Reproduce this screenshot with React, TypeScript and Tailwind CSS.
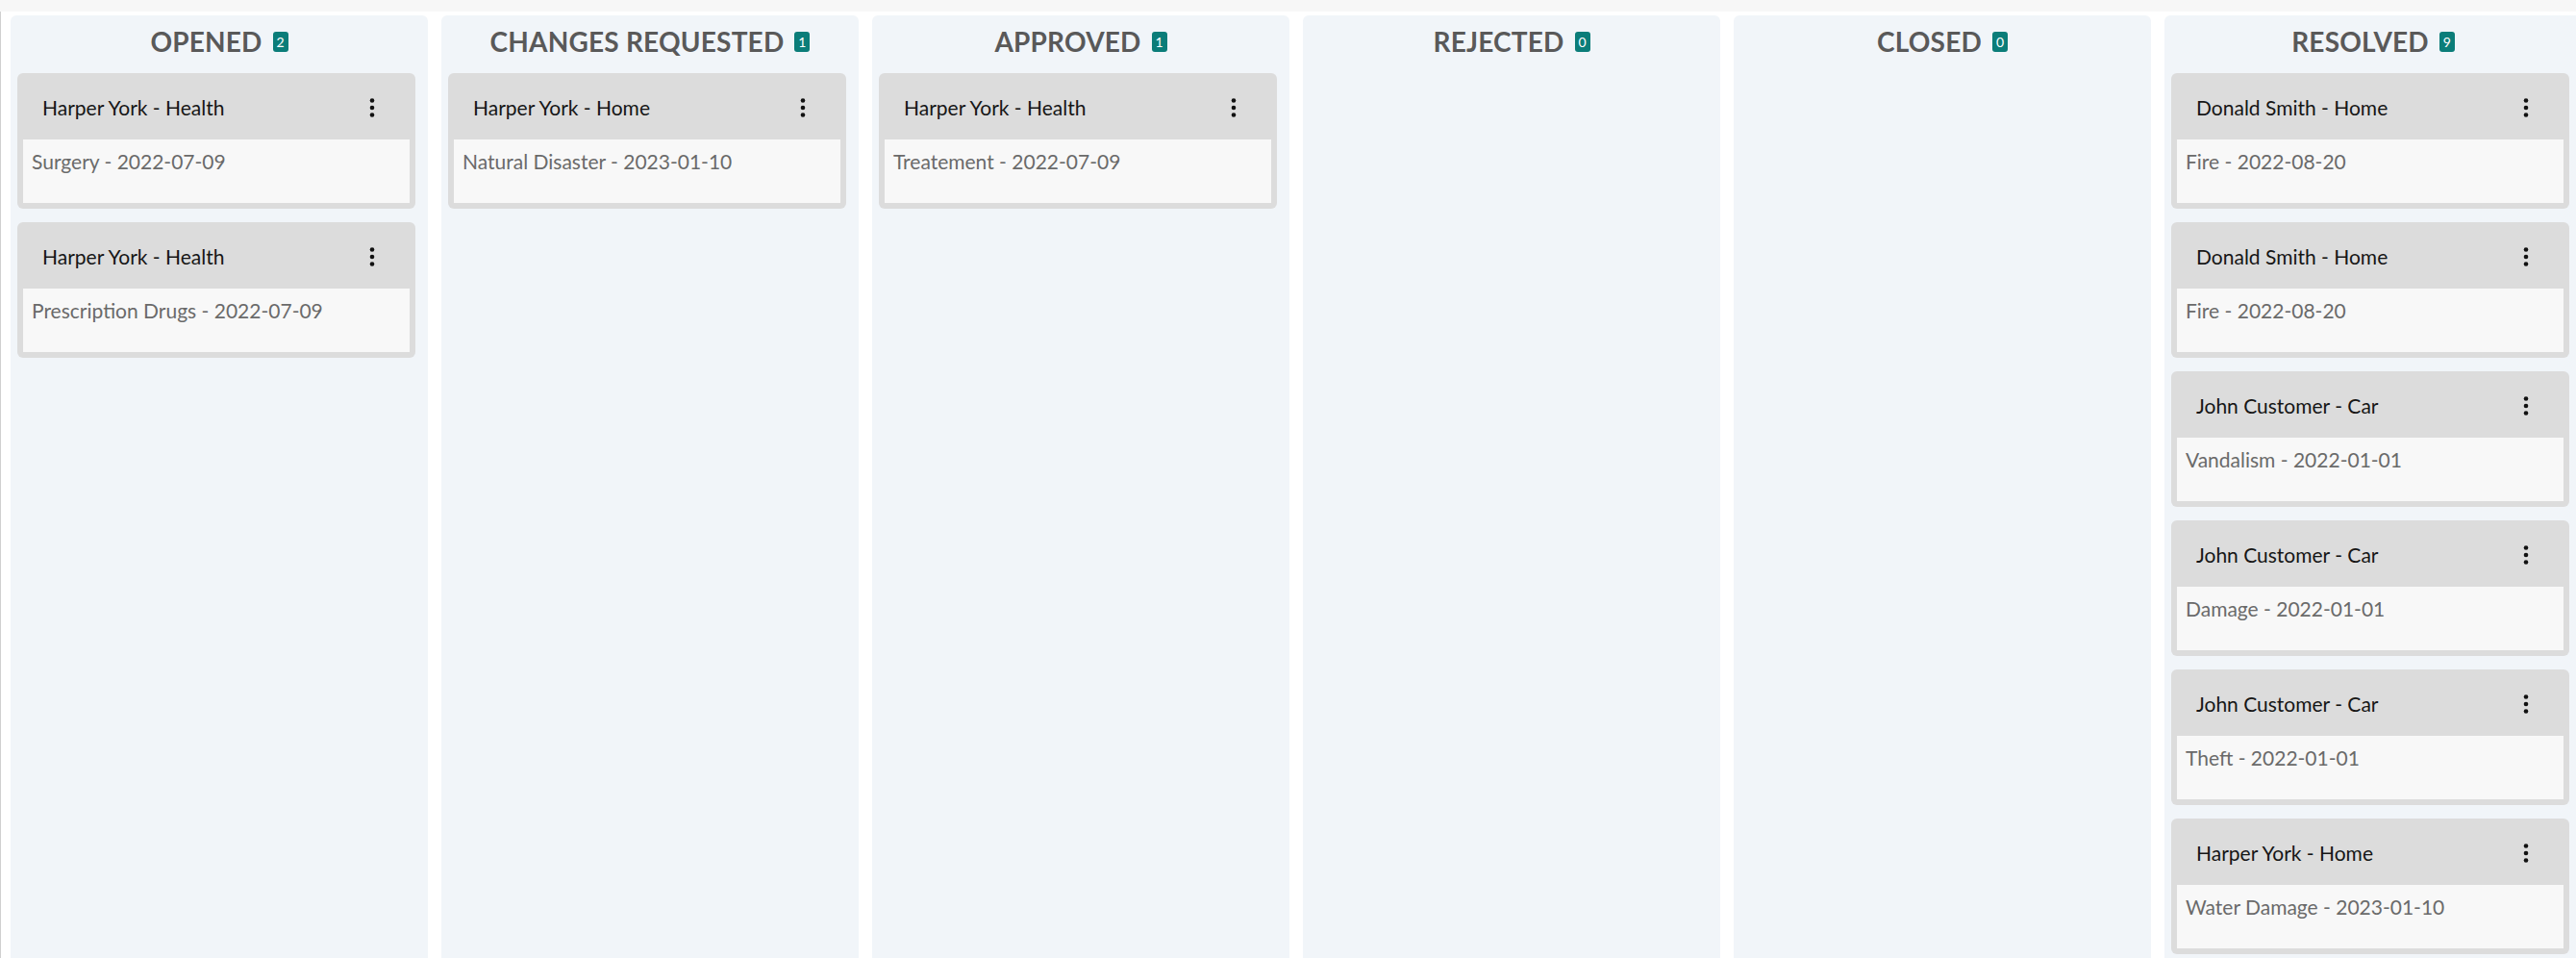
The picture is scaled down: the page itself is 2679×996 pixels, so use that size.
import React from "react";

interface Claim {
  title: string;
  detail: string;
}

interface Lane {
  name: string;
  count: number;
  claims: Claim[];
}

const lanes: Lane[] = [
  {
    name: "OPENED",
    count: 2,
    claims: [
      { title: "Harper York - Health", detail: "Surgery - 2022-07-09" },
      { title: "Harper York - Health", detail: "Prescription Drugs - 2022-07-09" },
    ],
  },
  {
    name: "CHANGES REQUESTED",
    count: 1,
    claims: [{ title: "Harper York - Home", detail: "Natural Disaster - 2023-01-10" }],
  },
  {
    name: "APPROVED",
    count: 1,
    claims: [{ title: "Harper York - Health", detail: "Treatement - 2022-07-09" }],
  },
  { name: "REJECTED", count: 0, claims: [] },
  { name: "CLOSED", count: 0, claims: [] },
  {
    name: "RESOLVED",
    count: 9,
    // only the cards that fit on screen are listed here
    claims: [
      { title: "Donald Smith - Home", detail: "Fire - 2022-08-20" },
      { title: "Donald Smith - Home", detail: "Fire - 2022-08-20" },
      { title: "John Customer - Car", detail: "Vandalism - 2022-01-01" },
      { title: "John Customer - Car", detail: "Damage - 2022-01-01" },
      { title: "John Customer - Car", detail: "Theft - 2022-01-01" },
      { title: "Harper York - Home", detail: "Water Damage - 2023-01-10" },
    ],
  },
];

function Kebab() {
  return (
    <svg width="10" height="24" viewBox="0 0 10 24" className="shrink-0">
      <circle cx="5" cy="4.5" r="2.3" fill="#111" />
      <circle cx="5" cy="12" r="2.3" fill="#111" />
      <circle cx="5" cy="19.5" r="2.3" fill="#111" />
    </svg>
  );
}

function ClaimCard({ claim }: { claim: Claim }) {
  return (
    <div className="shrink-0 rounded-[6px] bg-[#dcdcdc] p-[6px]">
      <div className="h-[63px] flex items-center justify-between pl-[20px] pr-[34px] pb-[4px]">
        <span className="text-[21px] text-[#161616]">{claim.title}</span>
        <Kebab />
      </div>
      <div className="h-[66px] bg-[#f8f8f8] pl-[9px] pt-[7px]">
        <p className="text-[21px] leading-[1.5] text-[#6a6a6a]">{claim.detail}</p>
      </div>
    </div>
  );
}

export default function App() {
  return (
    <div className="w-[2679px] h-[996px] overflow-hidden bg-white font-['Lato',sans-serif]">
      <div className="h-[12px] bg-[#f7f7f7]" />
      <div className="flex items-start gap-[14px] border-l border-[#d0d0d0] pl-[10px] pt-[4px] h-[984px] overflow-hidden">
        {lanes.map((lane) => (
          <div key={lane.name} className="w-[434px] min-h-[1200px] shrink-0 bg-[#f1f5f9] rounded-[6px] flex flex-col">
            <div className="h-[54px] shrink-0 flex items-center justify-center gap-[11px]">
              <h2 className="text-[28px] font-bold text-[#595959] tracking-[0.2px]">{lane.name}</h2>
              <span className="w-[16px] h-[21px] rounded-[3px] bg-[#0b7d79] text-white text-[14px] flex items-center justify-center">
                {lane.count}
              </span>
            </div>
            <div className="mt-[6px] flex flex-col gap-[14px] pl-[7px] pr-[13px] pb-[14px]">
              {lane.claims.map((claim, i) => (
                <ClaimCard key={i} claim={claim} />
              ))}
            </div>
          </div>
        ))}
      </div>
    </div>
  );
}
